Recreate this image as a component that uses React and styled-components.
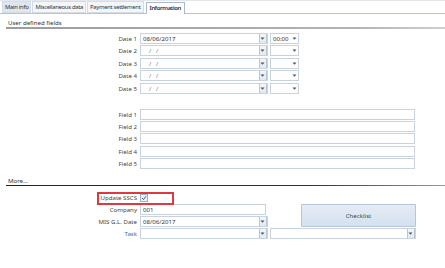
import React from "react";
import styled, { createGlobalStyle } from "styled-components";

const GlobalStyle = createGlobalStyle`
  body {
    margin: 0;
    background: #fff;
    font-family: "Noto Sans", "Open Sans", sans-serif;
  }
`;

const dateRows = [
  { label: "Date 1", value: "08/06/2017", time: "00:00" },
  { label: "Date 2", value: "" },
  { label: "Date 3", value: "" },
  { label: "Date 4", value: "" },
  { label: "Date 5", value: "" },
];

const fieldRows = ["Field 1", "Field 2", "Field 3", "Field 4", "Field 5"];

const tabs = [
  { name: "Main info", tone: "hover" },
  { name: "Miscellaneous data", tone: "plain" },
  { name: "Payment settlement", tone: "plain" },
  { name: "Information", tone: "active" },
];

const Arrow = () => (
  <svg width="5" height="3" viewBox="0 0 5 3">
    <path d="M0.5 0.5 L4.5 0.5 L2.5 2.8 Z" fill="#555" />
  </svg>
);

const Combo = ({ width, value, plainArrow }) => (
  <StCombo $width={width}>
    <StComboText>{value}</StComboText>
    {plainArrow ? (
      <StPlainArrow>
        <Arrow />
      </StPlainArrow>
    ) : (
      <StDropBtn>
        <Arrow />
      </StDropBtn>
    )}
  </StCombo>
);

const App = () => {
  return (
    <StPage>
      <GlobalStyle />
      <StTabBar>
        {tabs.map((t) => (
          <StTab key={t.name} $tone={t.tone}>
            {t.name}
          </StTab>
        ))}
      </StTabBar>

      <StSectionTitle $dark={false} $top={5}>
        User defined fields
      </StSectionTitle>

      <StRowGroup $top={4}>
        {dateRows.map((r) => (
          <StRow key={r.label}>
            <StLabel>{r.label}</StLabel>
            <Combo
              width={128}
              value={r.value || <StEmptyDate>/&nbsp;&nbsp;&nbsp;/</StEmptyDate>}
            />
            <StGap />
            <Combo width={29} value={r.time} plainArrow />
          </StRow>
        ))}
      </StRowGroup>

      <StRowGroup $top={15}>
        {fieldRows.map((f) => (
          <StRow key={f}>
            <StLabel>{f}</StLabel>
            <StTextBox $width={275} />
          </StRow>
        ))}
      </StRowGroup>

      <StSectionTitle $dark={true} $top={8}>
        More...
      </StSectionTitle>

      <StMoreGrid>
        <StHighlightRow>
          <StLabel>Update SSCS</StLabel>
          <StCheckbox>
            <svg width="6" height="6" viewBox="0 0 6 6">
              <path
                d="M1 3 L2.5 4.6 L5 1.2"
                stroke="#3b5f99"
                strokeWidth="1"
                fill="none"
              />
            </svg>
          </StCheckbox>
          <StHighlight />
        </StHighlightRow>

        <StLabel>Company</StLabel>
        <StTextBox $width={126}>001</StTextBox>
        <StChecklist>Checklist</StChecklist>

        <StLabel>MIS G.L. Date</StLabel>
        <Combo width={128} value="08/06/2017" />

        <StLabel $link>Task</StLabel>
        <Combo width={128} value="" />
        <StWide>
          <Combo width={146} value="" />
        </StWide>
      </StMoreGrid>
    </StPage>
  );
};

export default App;

const StPage = styled.div`
  width: 445px;
  height: 268px;
  overflow: hidden;
  background: #fff;
  color: #3c3c3c;
  font-size: 6.1px;
`;

const StTabBar = styled.div`
  display: flex;
  align-items: flex-end;
  gap: 1px;
  height: 12px;
  padding: 0 0 0 2px;
  border-top: 1px solid #e3e8ee;
  border-bottom: 1px solid #b7c4d4;
`;

const StTab = styled.div`
  height: ${(p) => (p.$tone === "active" ? "11px" : "10px")};
  line-height: ${(p) => (p.$tone === "active" ? "11px" : "10px")};
  padding: 0 ${(p) => (p.$tone === "active" ? "3px" : "2px")};
  margin-left: ${(p) => (p.$tone === "active" ? "1px" : "0")};
  margin-bottom: ${(p) => (p.$tone === "active" ? "-1px" : "0")};
  border: 1px solid
    ${(p) => (p.$tone === "active" ? "#a9b8cc" : "#d5dce5")};
  border-bottom: ${(p) => (p.$tone === "active" ? "none" : "1px solid #d5dce5")};
  background: ${(p) =>
    p.$tone === "active" ? "#fff" : p.$tone === "hover" ? "#dde6f1" : "#f5f6f7"};
  color: ${(p) => (p.$tone === "active" ? "#1e2c44" : "#333")};
  font-size: 5.9px;
  letter-spacing: -0.3px;
  font-weight: ${(p) => (p.$tone === "active" ? 600 : 400)};
  white-space: nowrap;
`;

const StSectionTitle = styled.div`
  margin: ${(p) => p.$top}px 0 0 6px;
  padding: 0 0 0 2px;
  height: 8px;
  line-height: 8px;
  color: #333;
  border-bottom: ${(p) => (p.$dark ? "1.5px solid #2f2f2f" : "2px solid #a7a7a7")};
  border-image: ${(p) =>
      p.$dark
        ? "linear-gradient(to right, #222, #333 70%, #9a9a9a)"
        : "linear-gradient(to right, #9c9c9c, #b4b4b4 80%, #d0d0d0)"}
    1;
`;

const StRowGroup = styled.div`
  display: flex;
  flex-direction: column;
  gap: 1.4px;
  margin-top: ${(p) => p.$top}px;
`;

const StRow = styled.div`
  display: flex;
  align-items: center;
  height: 11px;
`;

const StLabel = styled.div`
  width: 140px;
  box-sizing: border-box;
  padding-right: 3px;
  text-align: right;
  white-space: nowrap;
  color: ${(p) => (p.$link ? "#3b6cc0" : "#444")};
`;

const StGap = styled.div`
  width: 2px;
`;

const StCombo = styled.div`
  display: flex;
  align-items: center;
  width: ${(p) => p.$width}px;
  height: 11px;
  box-sizing: border-box;
  border: 1px solid #c9d3df;
  background: #fff;
`;

const StComboText = styled.div`
  flex: 1;
  padding-left: 2px;
  color: #333;
  white-space: nowrap;
  overflow: hidden;
`;

const StEmptyDate = styled.span`
  padding-left: 6px;
  color: #777;
`;

const StDropBtn = styled.div`
  display: flex;
  align-items: center;
  justify-content: center;
  width: 6px;
  height: 9px;
  margin-right: 0.5px;
  border: 1px solid #b9c6d6;
  border-top: none;
  border-bottom: none;
  background: linear-gradient(#f3f6fa, #e2e9f2);
`;

const StPlainArrow = styled.div`
  display: flex;
  align-items: center;
  justify-content: center;
  width: 8px;
  height: 9px;
`;

const StTextBox = styled.div`
  width: ${(p) => p.$width}px;
  height: 11px;
  line-height: 9px;
  box-sizing: border-box;
  padding-left: 2px;
  border: 1px solid #c9d3df;
  background: #fff;
  color: #333;
`;

const StMoreGrid = styled.div`
  display: grid;
  grid-template-columns: 140px 128px 2px 146px;
  grid-auto-rows: 11px;
  row-gap: 1px;
  align-items: center;
  margin-top: 6px;

  & > ${StLabel} {
    grid-column: 1;
  }
`;

const StHighlightRow = styled.div`
  position: relative;
  grid-column: 1 / 3;
  display: flex;
  align-items: center;
`;

const StCheckbox = styled.div`
  display: flex;
  align-items: center;
  justify-content: center;
  width: 6px;
  height: 6px;
  border: 1px solid #9fb0c6;
  background: #eef2f7;
`;

const StHighlight = styled.div`
  position: absolute;
  left: 97px;
  top: -1px;
  width: 73px;
  height: 9px;
  border: 2px solid #dd3a3f;
  pointer-events: none;
`;

const StChecklist = styled.div`
  grid-column: 4;
  grid-row: 2 / 4;
  align-self: stretch;
  margin: 0 0 0 31px;
  display: flex;
  align-items: center;
  justify-content: center;
  border: 1px solid #b6c6da;
  border-radius: 1px;
  background: linear-gradient(#e4ecf6, #d5e1ef);
  color: #444;
`;

const StWide = styled.div`
  grid-column: 4;
`;
